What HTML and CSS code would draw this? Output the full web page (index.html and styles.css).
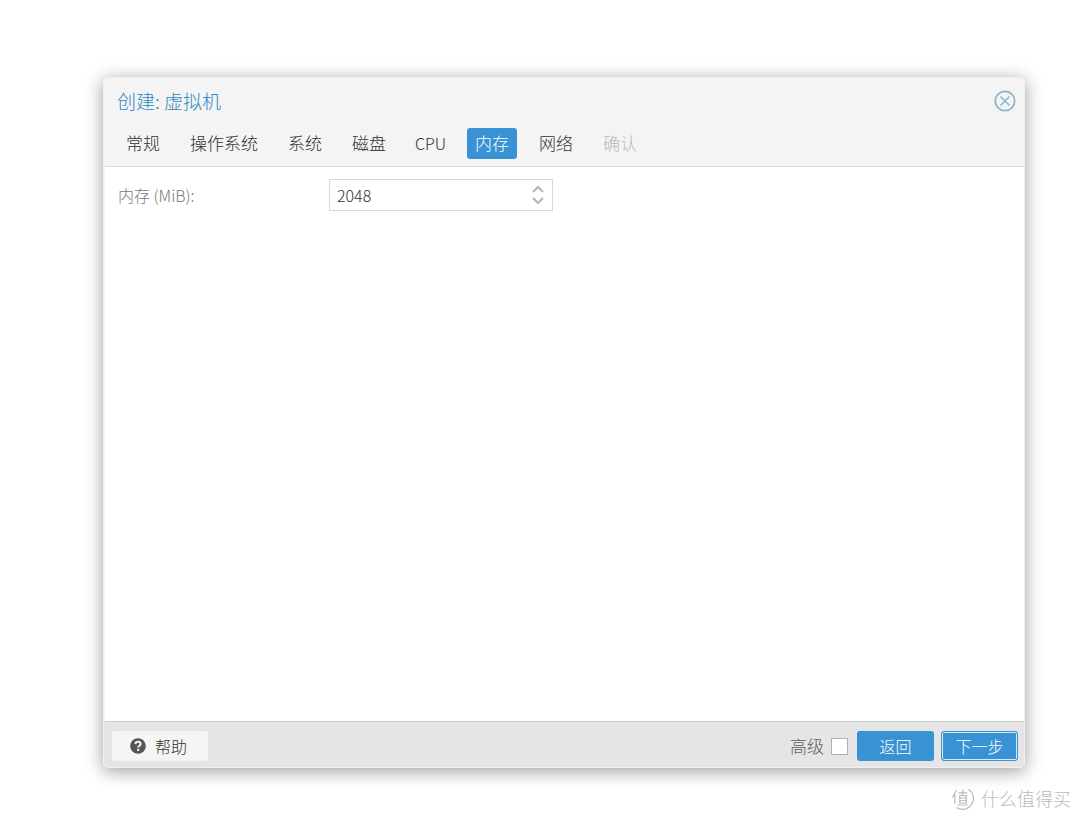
FILE: index.html
```html
<!DOCTYPE html>
<html lang="zh-CN">
<head>
    <meta charset="UTF-8">
    <meta name="viewport" content="width=device-width, initial-scale=1.0">
    <title>创建: 虚拟机</title>
    <link rel="stylesheet" href="styles.css">
</head>
<body>
    <form class="window">
        <header class="window-header">
            <div class="title-bar">
                <h1 class="title">创建: 虚拟机</h1>
                <button type="button" class="close-btn" aria-label="关闭">
                    <svg width="22" height="22" viewBox="0 0 22 22" fill="none" stroke="currentColor">
                        <circle cx="11" cy="11" r="9.7" stroke-width="1.8"/>
                        <path d="M6.500 6.500l9 9M15.500 6.500l-9 9" stroke-width="1.6"/>
                    </svg>
                </button>
            </div>
            <nav class="tabs">
                <button type="button" class="tab">常规</button>
                <button type="button" class="tab">操作系统</button>
                <button type="button" class="tab">系统</button>
                <button type="button" class="tab">磁盘</button>
                <button type="button" class="tab latin">CPU</button>
                <button type="button" class="tab active">内存</button>
                <button type="button" class="tab">网络</button>
                <button type="button" class="tab" disabled>确认</button>
            </nav>
        </header>

        <main class="window-body">
            <div class="field">
                <label class="field-label" for="memory">内存 (MiB):</label>
                <div class="spinner">
                    <input class="spinner-input" id="memory" type="text" inputmode="numeric" value="2048">
                    <div class="spinner-buttons">
                        <button type="button" class="spinner-btn" id="memory-up" aria-label="增加">
                            <svg width="12" height="8" viewBox="0 0 12 8" fill="none" stroke="currentColor" stroke-width="2"><path d="M1 7l5-5 5 5"/></svg>
                        </button>
                        <button type="button" class="spinner-btn" id="memory-down" aria-label="减少">
                            <svg width="12" height="8" viewBox="0 0 12 8" fill="none" stroke="currentColor" stroke-width="2"><path d="M1 1l5 5 5-5"/></svg>
                        </button>
                    </div>
                </div>
            </div>
        </main>

        <footer class="window-footer">
            <button type="button" class="btn help-btn">
                <svg width="16" height="16" viewBox="0 0 16 16" fill="none">
                    <circle cx="8" cy="8" r="7.8" fill="#555"/>
                    <path d="M5.4 6.1C5.5 4.5 6.5 3.7 8 3.7c1.5 0 2.6.9 2.6 2.2 0 1.9-2.4 1.8-2.4 3.6" stroke="#f5f5f5" stroke-width="2"/>
                    <rect x="7.1" y="10.8" width="2.1" height="2.1" fill="#f5f5f5"/>
                </svg>
                帮助
            </button>
            <div class="actions">
                <label class="advanced" for="advanced">高级</label>
                <input class="checkbox" id="advanced" type="checkbox">
                <button type="button" class="btn primary-btn">返回</button>
                <button type="button" class="btn primary-btn focused">下一步</button>
            </div>
        </footer>
    </form>

    <div class="watermark">
        <svg class="watermark-logo" width="24" height="24" viewBox="0 0 24 24" fill="none" stroke="currentColor" stroke-width="1.2">
            <path d="M18.500 3.200A10.600 10.600 0 1 1 6.500 21.500"/>
            <path d="M6.500 4L2.500 11.500M4.800 8V18M8.300 6.800h9M13 3.500l-.5 6M9.800 9.500h6.500v7.500H9.800zM9.800 12h6.500M9.800 14.500h6.500M7.300 19h11"/>
        </svg>
        <span>什么值得买</span>
    </div>

    <script>
        const memory = document.getElementById("memory");

        // Step the memory value by 32 MiB
        function stepMemory(amount) {
            memory.value = Math.max(16, (parseInt(memory.value) || 0) + amount);
        }

        document.getElementById("memory-up").addEventListener("click", () => stepMemory(32));
        document.getElementById("memory-down").addEventListener("click", () => stepMemory(-32));
    </script>
</body>
</html>
```

FILE: styles.css
```css
* {
    box-sizing: border-box;
}
body {
    display: flex;
    flex-direction: column;
    min-height: 100vh;
    margin: 0;
    padding: 77px 9px 10px 103px;
    background-color: #fff;
    color: #303030;
    font-family: "Noto Sans CJK SC", sans-serif;
    font-weight: 300;
    font-size: 17px;
    line-height: 24px;
}
button,
input {
    font: inherit;
    color: inherit;
}
button {
    cursor: pointer;
}
.window {
    flex: 1;
    display: flex;
    flex-direction: column;
    margin-right: 46px;
    border: 1px solid #f0f0f0;
    border-radius: 5px;
    background-color: #f4f4f4;
    box-shadow: 0 3px 18px rgba(0, 0, 0, 0.4);
}
/* Header */
.window-header {
    padding: 11px 8px 7px 13px;
}
.title-bar {
    display: flex;
    justify-content: space-between;
    align-items: center;
}
.title {
    margin: 0;
    font-size: 19px;
    font-weight: 300;
    color: #3088c0;
}
.close-btn {
    display: flex;
    padding: 0;
    border: none;
    background: none;
    color: #8fb5cf;
}
.tabs {
    display: flex;
    gap: 14px;
    margin-top: 15px;
    padding-left: 1px;
}
.tab {
    height: 31px;
    padding: 0 8px 2px;
    border: none;
    border-radius: 3px;
    background: none;
}
.tab.latin {
    padding: 0 7px 2px;
    font-size: 16px;
}
.tab.active {
    background-color: #3892d4;
    color: #fff;
}
.tab:disabled {
    color: #b8b8b8;
    cursor: default;
}
/* Form */
.window-body {
    flex: 1;
    margin-left: 1px;
    padding: 12px 13px;
    border-top: 1px solid #dcdcdc;
    border-bottom: 1px solid #c8c8c8;
    background-color: #fff;
}
.field {
    display: flex;
    align-items: center;
}
.field-label {
    width: 211px;
    font-size: 16px;
    color: #777;
}
.spinner {
    display: flex;
    width: 224px;
    height: 32px;
    border: 1px solid #d9d9d9;
}
.spinner-input {
    flex: 1;
    min-width: 0;
    padding: 0 7px;
    border: none;
    outline: none;
    background: none;
    font-size: 16px;
}
.spinner-buttons {
    display: flex;
    flex-direction: column;
    justify-content: center;
    gap: 4px;
    padding-right: 8px;
}
.spinner-btn {
    display: flex;
    padding: 0;
    border: none;
    background: none;
    color: #b5b5b5;
}
/* Footer */
.window-footer {
    display: flex;
    justify-content: space-between;
    align-items: center;
    padding: 9px 6px 6px 8px;
    border-radius: 0 0 4px 4px;
    background-color: #e5e5e5;
}
.btn {
    height: 30px;
    border: 1px solid transparent;
    border-radius: 3px;
    font-size: 16px;
}
.help-btn {
    display: flex;
    align-items: center;
    gap: 9px;
    padding: 0 20px 0 17px;
    background-color: #f5f5f5;
}
.actions {
    display: flex;
    align-items: center;
    gap: 7px;
}
.advanced {
    color: #606060;
}
.checkbox {
    appearance: none;
    width: 17px;
    height: 17px;
    margin: 0 2px 0 0;
    border: 1px solid #b0b0b0;
    background-color: #fff;
}
.checkbox:checked {
    background-color: #3892d4;
}
.primary-btn {
    width: 77px;
    padding: 0;
    background-color: #3892d4;
    color: #fff;
}
.primary-btn.focused {
    border-color: #3892d4;
    box-shadow: inset 0 0 0 1px #d5e9f7;
}
.watermark {
    display: flex;
    justify-content: flex-end;
    align-items: center;
    gap: 7px;
    margin-top: 18px;
    color: #bbb;
    font-size: 18px;
}
```
